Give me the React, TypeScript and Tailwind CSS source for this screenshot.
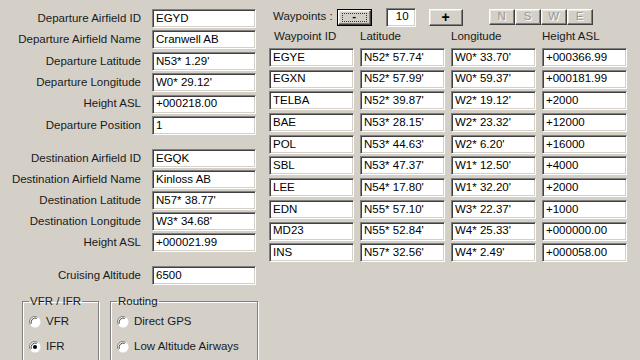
import type { ReactNode } from 'react';

const FONT = 'font-["Liberation_Sans",Arial,sans-serif]';

const sunken =
  'bg-white border-t border-l border-b border-r border-t-[#808080] border-l-[#808080] border-b-white border-r-white shadow-[inset_1px_1px_0_#404040,inset_-1px_-1px_0_#d4d0c8]';

const raised =
  'border-t border-l border-b border-r border-t-white border-l-white border-b-[#404040] border-r-[#404040] shadow-[inset_-1px_-1px_0_#808080,inset_1px_1px_0_#e8e6e1]';

const departure = [
  ['Departure Airfield ID', 'EGYD'],
  ['Departure Airfield Name', 'Cranwell AB'],
  ['Departure Latitude', "N53* 1.29'"],
  ['Departure Longitude', "W0* 29.12'"],
  ['Height ASL', '+000218.00'],
  ['Departure Position', '1'],
];

const destination = [
  ['Destination Airfield ID', 'EGQK'],
  ['Destination Airfield Name', 'Kinloss AB'],
  ['Destination Latitude', "N57* 38.77'"],
  ['Destination Longitude', "W3* 34.68'"],
  ['Height ASL', '+000021.99'],
];

const waypoints = [
  ['EGYE', "N52* 57.74'", "W0* 33.70'", '+000366.99'],
  ['EGXN', "N52* 57.99'", "W0* 59.37'", '+000181.99'],
  ['TELBA', "N52* 39.87'", "W2* 19.12'", '+2000'],
  ['BAE', "N53* 28.15'", "W2* 23.32'", '+12000'],
  ['POL', "N53* 44.63'", "W2* 6.20'", '+16000'],
  ['SBL', "N53* 47.37'", "W1* 12.50'", '+4000'],
  ['LEE', "N54* 17.80'", "W1* 32.20'", '+2000'],
  ['EDN', "N55* 57.10'", "W3* 22.37'", '+1000'],
  ['MD23', "N55* 52.84'", "W4* 25.33'", '+000000.00'],
  ['INS', "N57* 32.56'", "W4* 2.49'", '+000058.00'],
];

const Field = ({ value, className = '' }: { value: string; className?: string }) => (
  <div className={`${sunken} h-[19px] pl-[3px] flex items-center text-black whitespace-nowrap overflow-hidden ${className}`}>
    {value}
  </div>
);

const LabeledRow = ({ label, value }: { label: string; value: string }) => (
  <div className="flex items-center h-[19px]">
    <div className="w-[141px] text-right text-[#1a1a1a] whitespace-nowrap">{label}</div>
    <Field value={value} className="ml-[11px] w-[104px]" />
  </div>
);

const Radio = ({ checked, children }: { checked?: boolean; children: ReactNode }) => (
  <div className="flex items-center h-[16px]">
    <svg width="12" height="12" viewBox="0 0 12 12" className="shrink-0">
      <circle cx="6" cy="6" r="5.5" fill="#ffffff" />
      <path d="M1.2 8.5 A5.3 5.3 0 0 1 8.5 1.2" fill="none" stroke="#808080" strokeWidth="1" />
      <path d="M2.3 7.6 A4.2 4.2 0 0 1 7.6 2.3" fill="none" stroke="#404040" strokeWidth="1" />
      {checked && <circle cx="6" cy="6" r="2" fill="#000" />}
    </svg>
    <span className="ml-[5px] text-[#1a1a1a] whitespace-nowrap">{children}</span>
  </div>
);

const GroupBox = ({ title, className, children }: { title: string; className: string; children: ReactNode }) => (
  <fieldset
    className={`border border-[#808080] shadow-[1px_1px_0_#ffffff,inset_1px_1px_0_#ffffff] px-[8px] pb-[6px] ${className}`}
  >
    <legend className="px-[1px] ml-[-2px] text-[#1a1a1a] leading-[13px]">{title}</legend>
    {children}
  </fieldset>
);

export default function App() {
  return (
    <div className={`${FONT} text-[11.5px] leading-none w-[640px] h-[360px] bg-[#d4d0c8] overflow-hidden flex`}>
      {/* left: airfields */}
      <div className="w-[262px] shrink-0 flex flex-col pt-[9px]">
        <div className="flex flex-col gap-[2.4px]">
          {departure.map(([l, v]) => (
            <LabeledRow key={l} label={l} value={v} />
          ))}
        </div>

        <div className="flex flex-col gap-[2.1px] mt-[14px]">
          {destination.map(([l, v]) => (
            <LabeledRow key={l} label={l} value={v} />
          ))}
        </div>

        <div className="flex items-center h-[18px] mt-[14.6px]">
          <div className="w-[141px] text-right text-[#1a1a1a]">Cruising Altitude</div>
          <Field value="6500" className="ml-[11px] w-[104px] h-[18px]" />
        </div>

        <div className="flex items-start mt-[10px]">
          <GroupBox title="VFR / IFR" className="ml-[22px] w-[77px] h-[80px]">
            <div className="flex flex-col gap-[9px] pt-[6px] pl-[0px] -ml-[2px]">
              <Radio>VFR</Radio>
              <Radio checked>IFR</Radio>
            </div>
          </GroupBox>
          <GroupBox title="Routing" className="ml-[11px] w-[148px] h-[80px]">
            <div className="flex flex-col gap-[9px] pt-[6px] pl-[0px] -ml-[2px]">
              <Radio>Direct GPS</Radio>
              <Radio>Low Altitude Airways</Radio>
            </div>
          </GroupBox>
        </div>
      </div>

      {/* right: waypoints */}
      <div className="flex-1 pl-[7px] pt-[9px] flex flex-col">
        <div className="flex items-center h-[16px]">
          <span className="ml-[4px] text-[#1a1a1a]">Waypoints :</span>
          <div className="ml-[4px] w-[35px] h-[17px] border border-black">
            <div className={`${raised} h-full flex items-center justify-center`}>
              <div className="border border-dotted border-[#333] w-[25px] h-[9px] flex items-center justify-center font-bold">-</div>
            </div>
          </div>
          <Field value="10" className="ml-[14px] w-[30px] h-[17px] justify-center" />
          <div className={`${raised} ml-[13px] w-[34px] h-[17px] flex items-center justify-center text-[14px] font-bold`}>+</div>
          <div className="ml-[26px] flex">
            {['N', 'S', 'W', 'E'].map((d) => (
              <div
                key={d}
                className={`${raised} w-[26px] h-[16px] flex items-center justify-center text-[#9a968f] [text-shadow:1px_1px_0_#ffffff]`}
              >
                {d}
              </div>
            ))}
          </div>
        </div>

        <div className="grid grid-cols-[85px_85px_85px_85px] gap-x-[6px] mt-[2px] h-[19px] items-center text-[#1a1a1a]">
          <span className="pl-[5px]">Waypoint ID</span>
          <span>Latitude</span>
          <span>Longitude</span>
          <span>Height ASL</span>
        </div>

        <div className="grid grid-cols-[85px_85px_85px_85px] gap-x-[6px] gap-y-[2.7px] mt-[2px]">
          {waypoints.map((row) =>
            row.map((cell, i) => <Field key={row[0] + i} value={cell} />)
          )}
        </div>
      </div>
    </div>
  );
}
